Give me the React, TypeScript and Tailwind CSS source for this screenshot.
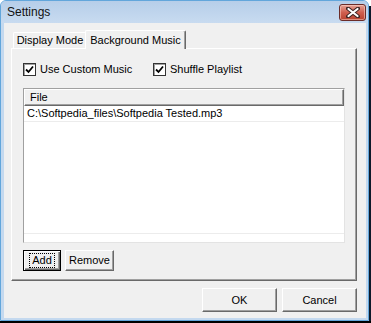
import React from "react";

const ui = "font-['Liberation_Sans',Arial,sans-serif] text-[11px] text-black";

const Check = ({ label, className = "" }: { label: string; className?: string }) => (
  <label className={`flex items-center gap-[4px] ${className}`}>
    <span className="w-[13px] h-[13px] flex items-center justify-center bg-white border border-[#333] shadow-[inset_1px_1px_0_#a0a0a0]">
      <svg width="9" height="9" viewBox="0 0 9 9">
        <path d="M1 4.5 L3.5 7 L8 1.5" fill="none" stroke="#000" strokeWidth="1.8" />
      </svg>
    </span>
    <span>{label}</span>
  </label>
);

const Btn = ({
  children,
  className = "",
  primary = false,
}: {
  children: React.ReactNode;
  className?: string;
  primary?: boolean;
}) => (
  <button
    className={`flex items-center justify-center bg-[#f0f0f0] ${
      primary
        ? "border border-[#000] shadow-[inset_1px_1px_0_#fff,inset_-1px_-1px_0_#696969,inset_-2px_-2px_0_#a0a0a0]"
        : "border-t border-l border-white border-r border-b border-r-[#696969] border-b-[#696969] shadow-[inset_-1px_-1px_0_#a0a0a0]"
    } ${className}`}
  >
    {primary ? (
      <span className="px-[2px] leading-[13px] outline outline-1 outline-dotted outline-black">{children}</span>
    ) : (
      children
    )}
  </button>
);

const CloseButton = () => (
  <div className="w-[27px] h-[17px] rounded-[3px] border border-[#6b2c28] bg-gradient-to-b from-[#e4a196] via-[#cf5f4f] to-[#b9422f] flex items-center justify-center shadow-[inset_0_0_0_1px_rgba(255,220,210,0.5)]">
    <svg width="14" height="11" viewBox="0 0 14 11">
      <path d="M2 1.5 L12 9.5 M12 1.5 L2 9.5" stroke="#3c2423" strokeWidth="4" strokeLinecap="round" />
      <path d="M2.5 2 L11.5 9 M11.5 2 L2.5 9" stroke="#fff" strokeWidth="2.2" strokeLinecap="round" />
    </svg>
  </div>
);

export default function App() {
  return (
    <div className={`w-[371px] h-[323px] flex flex-col bg-white ${ui}`}>
      <div className="flex h-[321px]">
        <div className="w-[369px] h-[321px] flex flex-col rounded-t-[6px] border border-[#62a6db] bg-[#c4d9ef]">
          {/* title bar */}
          <div className="h-[22px] flex items-center justify-between pl-[6px] pr-[2px] rounded-t-[5px] bg-gradient-to-b from-[#b6cee9] to-[#c8dbf0]">
            <span className="text-[12px] font-['Liberation_Sans',Arial,sans-serif] text-[#111]">Settings</span>
            <div className="pt-[1px]">
              <CloseButton />
            </div>
          </div>
          {/* client */}
          <div className="ml-[3px] mr-[2px] h-[295px] bg-[#f0f0f0] flex flex-col pl-[7px] pr-[9px] pt-[7px]">
            {/* tabs */}
            <div className="flex items-end h-[18px]">
              <div className="h-[16px] w-[74px] ml-[2px] flex items-center justify-center border-t border-l border-white border-r border-r-[#a0a0a0] rounded-t-[2px]">
                Display Mode
              </div>
              <div className="relative z-10 -ml-[2px] -mb-px h-[19px] w-[101px] flex items-center justify-center bg-[#f0f0f0] border-t border-l border-white border-r border-r-[#696969] shadow-[inset_-1px_0_0_#a0a0a0] rounded-t-[2px]">
                Background Music
              </div>
            </div>
            {/* panel */}
            <div className="w-[346px] h-[233px] flex flex-col pl-[11px] pt-[14px] border-t border-l border-white border-r border-b border-r-[#696969] border-b-[#696969] shadow-[inset_-1px_-1px_0_#a0a0a0]">
              <div className="flex items-center h-[13px]">
                <Check label="Use Custom Music" className="w-[130px]" />
                <Check label="Shuffle Playlist" />
              </div>
              <div className="mt-[12px] w-[322px] h-[155px] bg-white border border-t-[#a0a0a0] border-l-[#a0a0a0] border-r-[#e3e3e3] border-b-[#e3e3e3] flex flex-col">
                <div className="h-[17px] flex items-center pl-[5px] bg-[#f0f0f0] border-t border-l border-white border-r border-b border-r-[#696969] border-b-[#696969] shadow-[inset_-1px_-1px_0_#a0a0a0]">
                  File
                </div>
                <div className="h-[16px] flex items-center pl-[3px] border-b border-[#ececec]">
                  C:\Softpedia_files\Softpedia Tested.mp3
                </div>
                <div className="flex-1" />
                <div className="h-[9px] border-t border-[#ececec]" />
              </div>
              <div className="mt-[7px] flex gap-[4px]">
                <Btn primary className="w-[38px] h-[21px]">
                  Add
                </Btn>
                <Btn className="w-[49px] h-[21px]">Remove</Btn>
              </div>
            </div>
            {/* dialog buttons */}
            <div className="mt-[7px] flex justify-end gap-[5px]">
              <Btn className="w-[75px] h-[24px]">OK</Btn>
              <Btn className="w-[75px] h-[24px]">Cancel</Btn>
            </div>
          </div>
        </div>
        <div className="w-[2px] mt-[6px] bg-[#0d1a2a]" />
      </div>
      <div className="h-[2px] bg-black" />
    </div>
  );
}
